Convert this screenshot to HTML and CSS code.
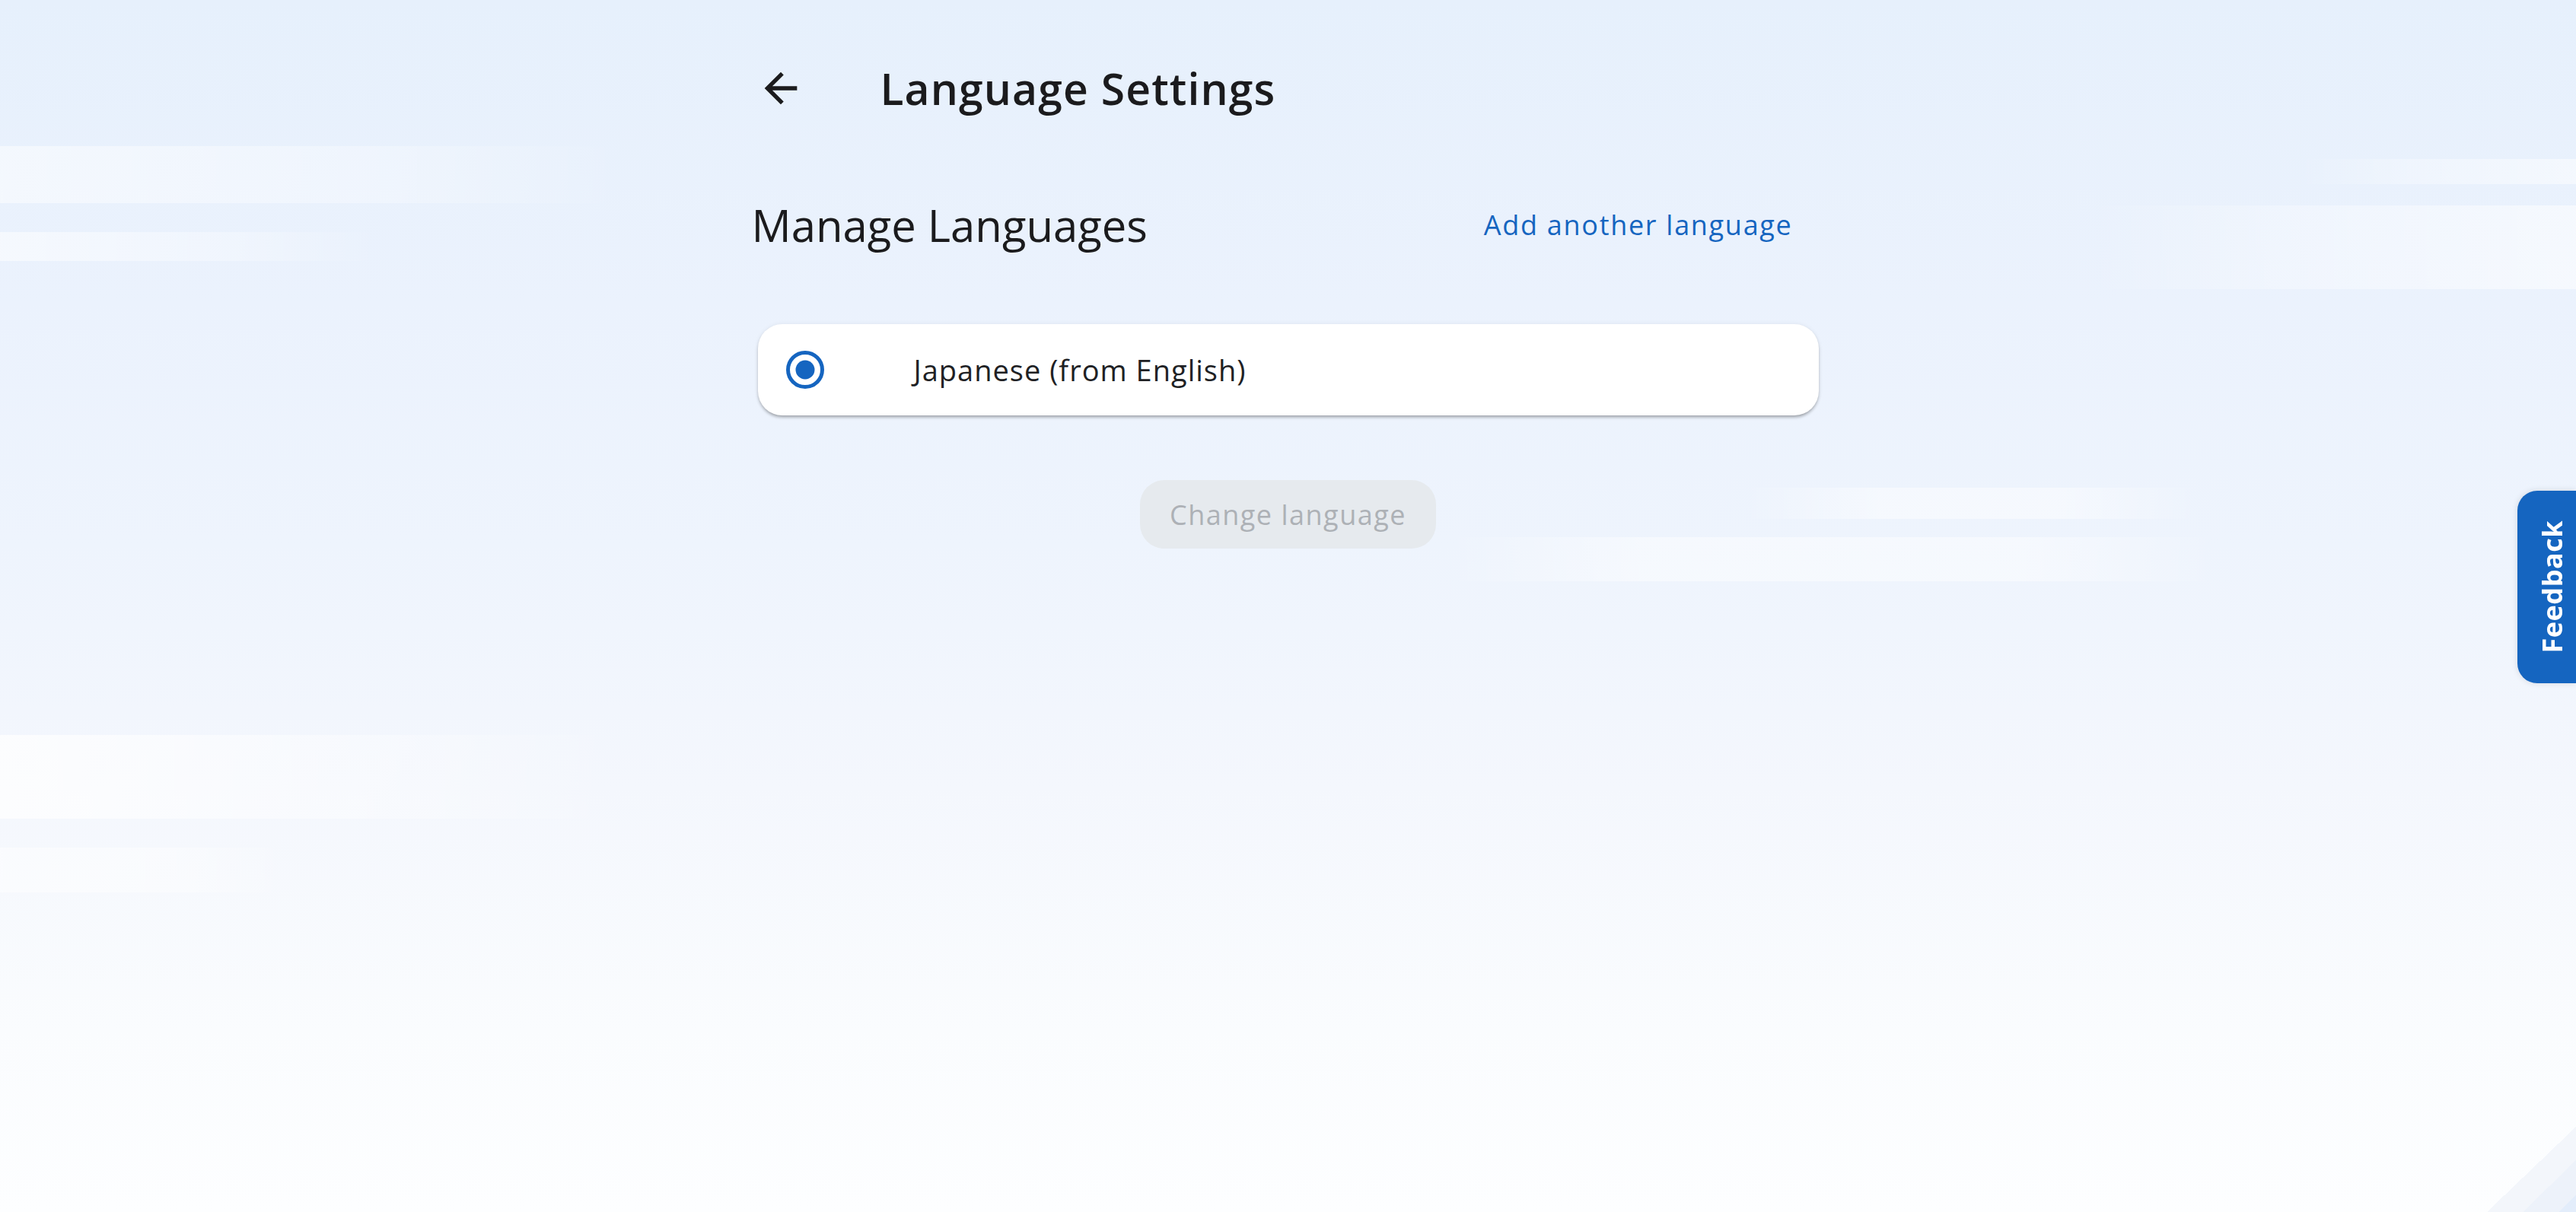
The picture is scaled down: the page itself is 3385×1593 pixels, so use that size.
FILE: index.html
```html
<!DOCTYPE html>
<html lang="en">
<head>
<meta charset="utf-8">
<title>Language Settings</title>
<link rel="stylesheet" href="styles.css">
</head>
<body>
<div class="page">
  <header class="topbar">
    <button class="back" aria-label="Back">
      <svg viewBox="0 0 24 24" width="64" height="64"><path d="M20 11H7.83l5.59-5.59L12 4l-8 8 8 8 1.41-1.41L7.83 13H20v-2z" fill="#1b1b1d"/></svg>
    </button>
    <h1 class="title">Language Settings</h1>
  </header>
  <section class="manage">
    <div class="manage-head">
      <h2 class="manage-title">Manage Languages</h2>
      <a class="add-link" href="#">Add another language</a>
    </div>
    <label class="lang-card">
      <span class="radio">
        <svg viewBox="0 0 50 50" width="50" height="50"><circle cx="25" cy="25" r="22.5" fill="none" stroke="#1565c0" stroke-width="5"/><circle cx="25" cy="25" r="12.5" fill="#1565c0"/></svg>
      </span>
      <span class="lang-name">Japanese (from English)</span>
    </label>
    <div class="actions">
      <button class="change-btn" disabled>Change language</button>
    </div>
  </section>
</div>
<button class="feedback"><span class="feedback-text">Feedback</span></button>
</body>
</html>
```
FILE: styles.css
```css
html, body {
  margin: 0;
  padding: 0;
}

body {
  min-height: 1593px;
  font-family: "Open Sans", "Noto Sans", "Liberation Sans", sans-serif;
  color: #1c1c1e;
  background-color: #f3f7fd;
  background-image:
    linear-gradient(to bottom right, transparent 50%, #e3edfb 50%),
    linear-gradient(to bottom right, transparent 50%, #edf2fa 50%),
    linear-gradient(to bottom right, transparent 50%, #f3f6fb 50%),
    linear-gradient(90deg, rgba(255,255,255,0.75), rgba(255,255,255,0.35) 60%, rgba(255,255,255,0)),
    linear-gradient(90deg, rgba(255,255,255,0.5), rgba(255,255,255,0.4) 60%, rgba(255,255,255,0)),
    linear-gradient(90deg, rgba(255,255,255,0.5), rgba(255,255,255,0.3) 60%, rgba(255,255,255,0)),
    linear-gradient(90deg, rgba(255,255,255,0.55), rgba(255,255,255,0.3) 60%, rgba(255,255,255,0)),
    linear-gradient(270deg, rgba(255,255,255,0.5), rgba(255,255,255,0.3) 60%, rgba(255,255,255,0)),
    linear-gradient(270deg, rgba(255,255,255,0.55), rgba(255,255,255,0.3) 60%, rgba(255,255,255,0)),
    linear-gradient(90deg, rgba(255,255,255,0), rgba(255,255,255,0.45) 30%, rgba(255,255,255,0.45) 70%, rgba(255,255,255,0)),
    linear-gradient(90deg, rgba(255,255,255,0), rgba(255,255,255,0.45) 25%, rgba(255,255,255,0.45) 75%, rgba(255,255,255,0)),
    linear-gradient(180deg, #e6f0fc 0%, #ebf2fd 25%, #eef4fd 45%, #f4f7fd 65%, #fafcfe 85%, #fdfeff 100%);
  background-size:
    23px 23px,
    70px 68px,
    117px 112px,
    820px 110px,
    380px 59px,
    820px 75px,
    500px 38px,
    365px 33px,
    645px 110px,
    600px 41px,
    1015px 58px,
    100% 100%;
  background-position:
    right bottom,
    right bottom,
    right bottom,
    0 966px,
    0 1114px,
    0 192px,
    0 305px,
    right 0 top 209px,
    right 0 top 270px,
    2290px 641px,
    1900px 706px,
    0 0;
  background-repeat: no-repeat;
}

.page {
  width: 1410px;
  margin: 0 auto;
  padding-top: 66px;
}

.topbar {
  display: flex;
  align-items: center;
  height: 100px;
}

.back {
  display: flex;
  align-items: center;
  justify-content: center;
  width: 64px;
  height: 64px;
  margin-left: 6px;
  padding: 0;
  border: 0;
  background: transparent;
  cursor: pointer;
}

.title {
  margin: 0 0 0 99px;
  font-size: 57px;
  font-weight: 600;
  color: #1b1b1d;
  letter-spacing: 1.1px;
}

.manage-head {
  display: flex;
  align-items: center;
  justify-content: space-between;
  height: 100px;
  margin-top: 79px;
}

.manage-title {
  margin: 0;
  font-size: 58px;
  font-weight: 400;
  color: #1b1b1d;
}

.add-link {
  padding-right: 42px;
  font-size: 36px;
  letter-spacing: 1.7px;
  color: #1565c0;
  text-decoration: none;
}

.lang-card {
  display: flex;
  align-items: center;
  height: 120px;
  margin: 81px 8px 0;
  padding-left: 37px;
  background: #ffffff;
  border-radius: 32px;
  box-shadow: 0 3px 4px -1px rgba(0, 0, 0, 0.35), 0 0 6px rgba(0, 0, 0, 0.06);
}

.radio {
  display: flex;
  width: 50px;
  height: 50px;
}

.lang-name {
  margin-left: 118px;
  font-size: 38px;
  letter-spacing: 1px;
  color: #202124;
}

.actions {
  display: flex;
  justify-content: center;
  margin-top: 85px;
}

.change-btn {
  width: 389px;
  height: 90px;
  border: 0;
  border-radius: 32px;
  background: #e6eaee;
  color: #adb1b6;
  font-family: inherit;
  font-size: 36px;
  letter-spacing: 1.5px;
}

.feedback {
  position: fixed;
  top: 645px;
  right: 0;
  display: flex;
  align-items: center;
  justify-content: center;
  width: 77px;
  height: 253px;
  padding: 0 0 0 14px;
  border: 0;
  border-radius: 26px 0 0 26px;
  background: #1565c0;
  box-shadow: 0 0 8px rgba(0, 0, 0, 0.12);
  font-family: inherit;
}

.feedback-text {
  writing-mode: vertical-rl;
  transform: rotate(180deg);
  color: #ffffff;
  font-size: 36px;
  font-weight: 700;
  letter-spacing: 0.5px;
}
```
